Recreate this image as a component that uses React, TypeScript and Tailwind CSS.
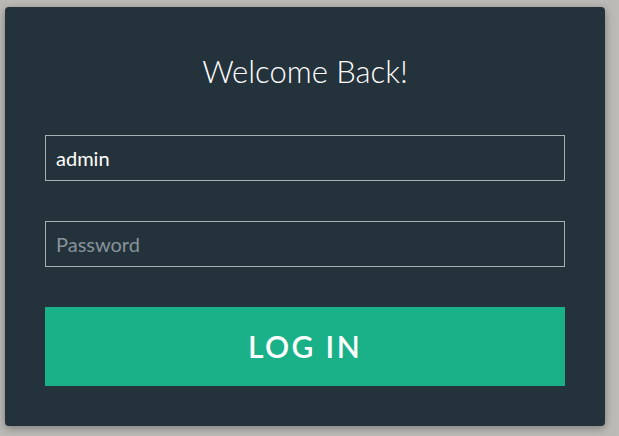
import React from 'react'

export default function App() {
  return (
    <div className="min-h-screen w-full bg-[#bcbab6] pt-[7px] pl-[5px]" style={{ fontFamily: 'Lato, "Open Sans", sans-serif' }}>
      <div className="w-[600px] h-[419px] rounded-[4px] bg-[#24323c] p-10 shadow-[0_2px_8px_rgba(0,0,0,0.35)]">
        <h1 className="text-center text-[31px] leading-[48px] font-light text-white mb-10">Welcome Back!</h1>
        <div className="flex flex-col gap-10">
          <input
            defaultValue="admin"
            className="h-[46px] w-full border border-[#a0b3b0] bg-transparent px-[10px] text-[20px] text-white outline-none"
          />
          <input
            type="password"
            placeholder="Password"
            className="h-[46px] w-full border border-[#a0b3b0] bg-transparent px-[10px] text-[20px] text-white outline-none placeholder:text-[#86949a]"
          />
        </div>
        <button className="mt-10 h-[79px] w-full bg-[#1ab188] text-[30px] font-semibold uppercase tracking-[0.08em] text-white">
          Log In
        </button>
      </div>
    </div>
  )
}
